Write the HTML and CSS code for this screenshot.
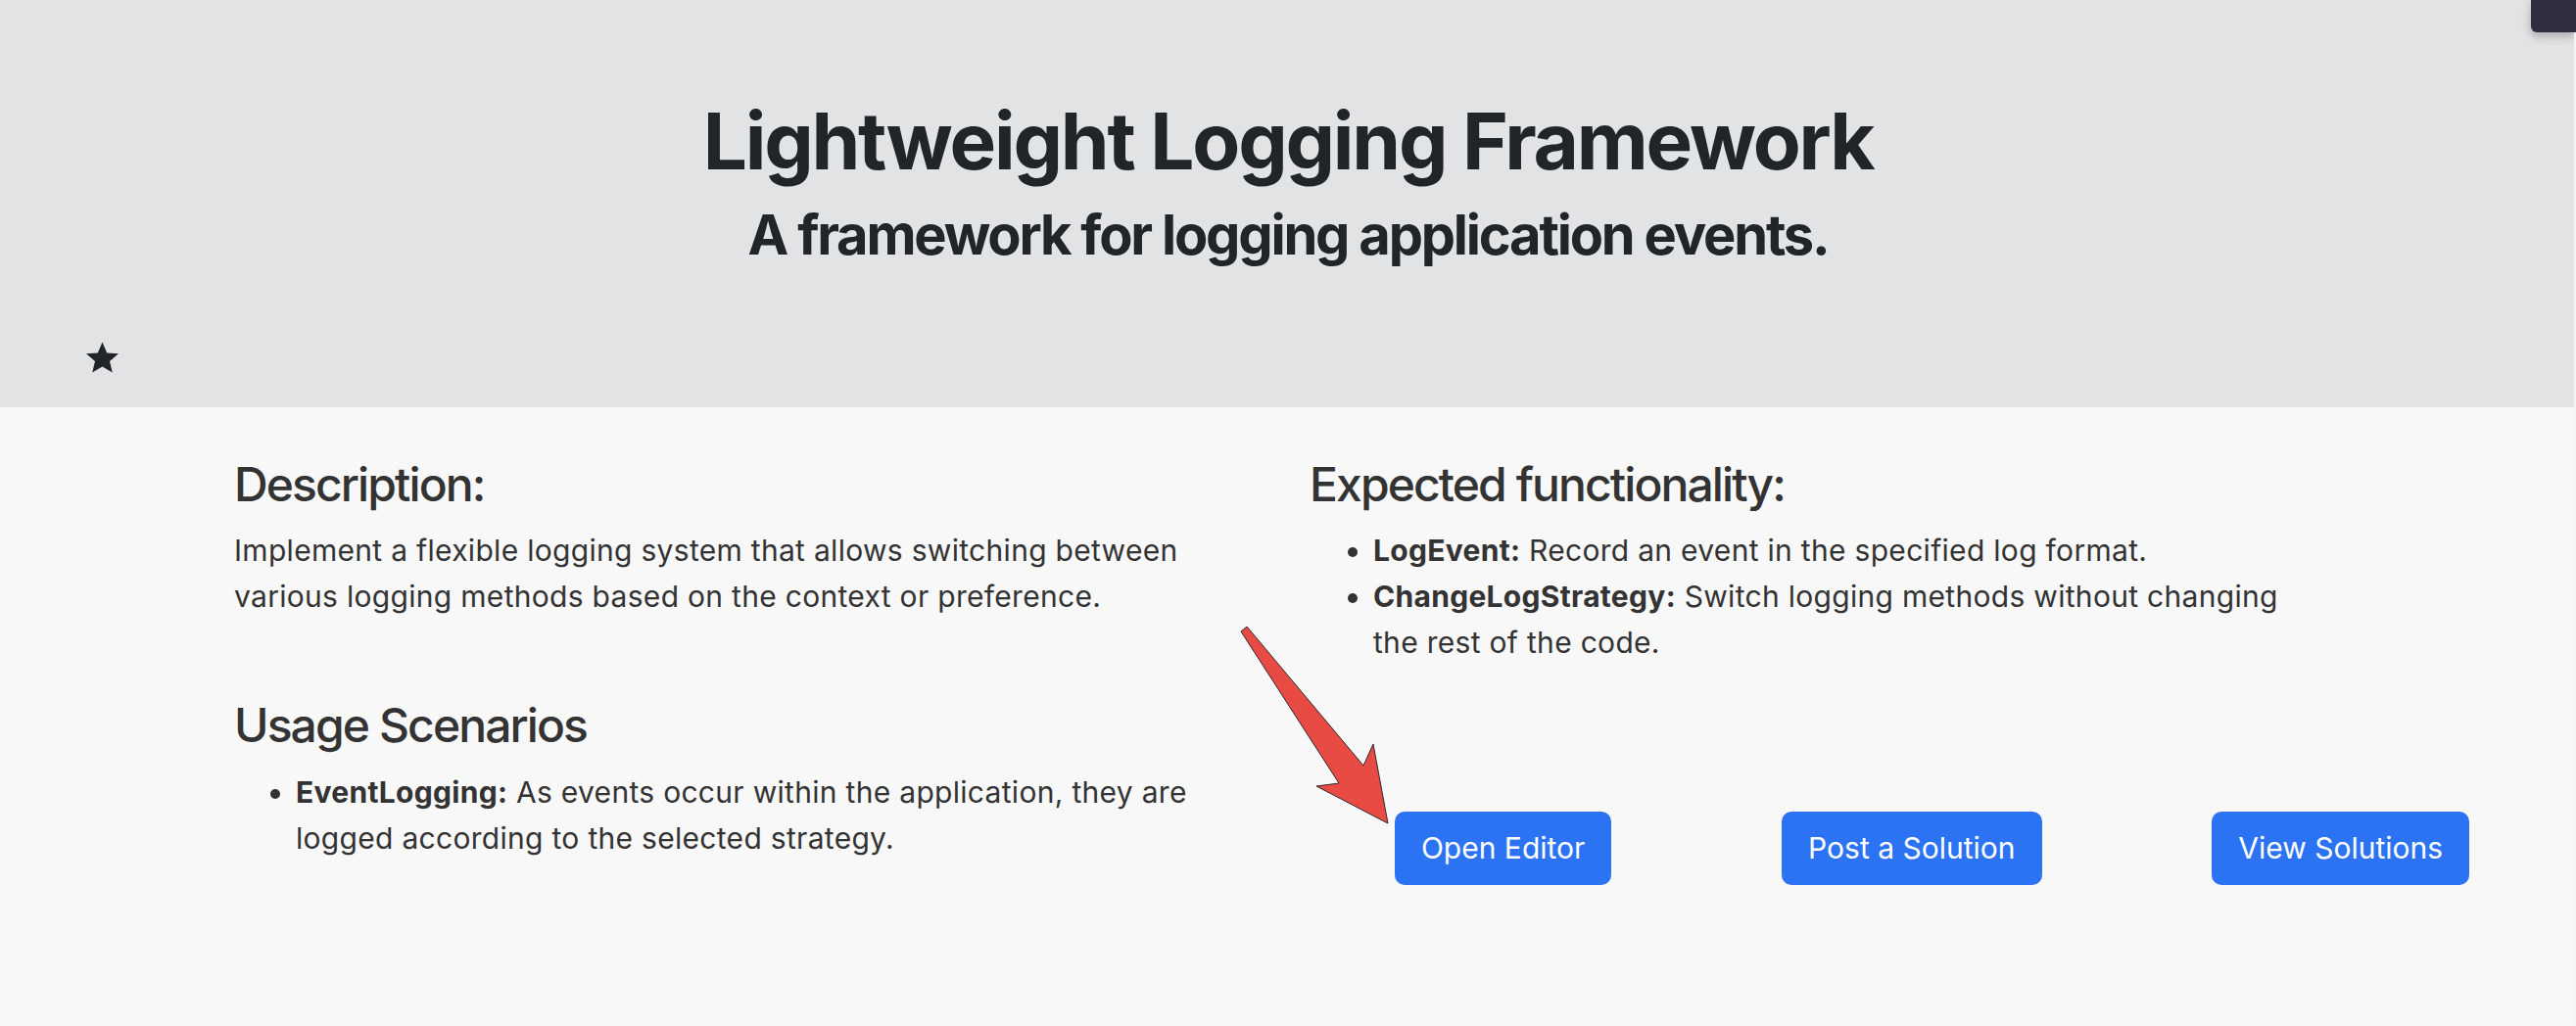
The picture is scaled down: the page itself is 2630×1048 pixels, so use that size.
FILE: index.html
```html
<!DOCTYPE html>
<html lang="en">
<head>
<meta charset="utf-8">
<title>Lightweight Logging Framework</title>
<link rel="stylesheet" href="styles.css">
</head>
<body>
<header class="hero">
  <h1 class="hero-title">Lightweight Logging Framework</h1>
  <h2 class="hero-subtitle">A framework for logging application events.</h2>
  <div class="hero-star">
    <svg width="37" height="37" viewBox="0 0 24 24" aria-hidden="true"><path d="M12 1.6l3.05 7.1 7.65.62-5.84 4.98 1.8 7.5L12 17.8l-6.66 4 1.8-7.5L1.3 9.32l7.65-.62z" fill="#212529"/></svg>
  </div>
</header>
<main class="content">
  <section class="col col-left">
    <h4 class="section-title">Description:</h4>
    <p class="text">Implement a flexible logging system that allows switching between various logging methods based on the context or preference.</p>
    <h4 class="section-title usage-title">Usage Scenarios</h4>
    <ul class="list">
      <li><strong>EventLogging:</strong> As events occur within the application, they are logged according to the selected strategy.</li>
    </ul>
  </section>
  <section class="col col-right">
    <h4 class="section-title">Expected functionality:</h4>
    <ul class="list list-right">
      <li><strong>LogEvent:</strong> Record an event in the specified log format.</li>
      <li><strong>ChangeLogStrategy:</strong> Switch logging methods without changing the rest of the code.</li>
    </ul>
    <div class="actions">
      <a class="btn">Open Editor</a>
      <a class="btn">Post a Solution</a>
      <a class="btn">View Solutions</a>
    </div>
  </section>
</main>
<svg class="arrow" width="200" height="240" viewBox="0 0 200 240" aria-hidden="true">
  <polygon points="17,25 23,20 142,162 152,140 167,221 94,183 117,180" fill="#e84b44" stroke="#2a2a2a" stroke-width="1" stroke-linejoin="miter"/>
</svg>
<div class="corner-tab"></div>
<div class="edge-line"></div>
</body>
</html>
```

FILE: styles.css
```css
* { box-sizing: border-box; }

html, body {
  margin: 0;
  padding: 0;
}

body {
  background: #f8f8f9;
  font-family: Inter, "Noto Sans", "Liberation Sans", sans-serif;
  color: #333333;
  width: 2630px;
  height: 1048px;
  overflow: hidden;
  position: relative;
}

.hero {
  background: #e2e3e5;
  height: 416px;
  padding-top: 96px;
  color: #212529;
}

.hero-title {
  margin: 0;
  text-align: center;
  font-size: 80px;
  line-height: 96px;
  font-weight: 700;
  letter-spacing: -2.2px;
}

.hero-subtitle {
  margin: 15px 0 0;
  text-align: center;
  font-size: 56px;
  line-height: 67px;
  font-weight: 700;
  letter-spacing: -2.2px;
}

.hero-star {
  margin: 73px 0 0 86px;
  width: 37px;
  height: 37px;
}

.hero-star svg { display: block; }

.content {
  display: grid;
  grid-template-columns: 1098px 1271px;
  padding: 50px 0 0 239px;
}

.section-title {
  margin: 0 0 15px;
  font-size: 48px;
  line-height: 58px;
  font-weight: 500;
  color: #333333;
  letter-spacing: -1.9px;
}

.usage-title {
  margin-top: 79px;
  margin-bottom: 16px;
}

.text {
  margin: 0;
  max-width: 1040px;
  font-size: 30px;
  line-height: 47px;
  letter-spacing: 0.3px;
}

.list {
  margin: 0;
  padding-left: 63px;
  font-size: 30px;
  line-height: 47px;
  letter-spacing: 0.3px;
  max-width: 1040px;
}

.list-right {
  max-width: 1020px;
  padding-left: 65px;
}

.list strong { font-weight: 700; }

.actions {
  margin-top: 149px;
  display: flex;
  justify-content: space-around;
}

.btn {
  display: inline-block;
  background: #2c73f4;
  color: #ffffff;
  font-size: 30px;
  line-height: 45px;
  padding: 15px 27px;
  border-radius: 10px;
  text-decoration: none;
}

.arrow {
  position: absolute;
  left: 1250px;
  top: 620px;
}

.corner-tab {
  position: absolute;
  top: 0;
  right: 0;
  width: 46px;
  height: 33px;
  background: #2f2e41;
  border-bottom-left-radius: 6px;
  box-shadow: 0 4px 10px rgba(0, 0, 0, 0.25);
}

.edge-line {
  position: absolute;
  top: 33px;
  right: 0;
  width: 2px;
  height: 1015px;
  background: #f4f4f4;
}
```
